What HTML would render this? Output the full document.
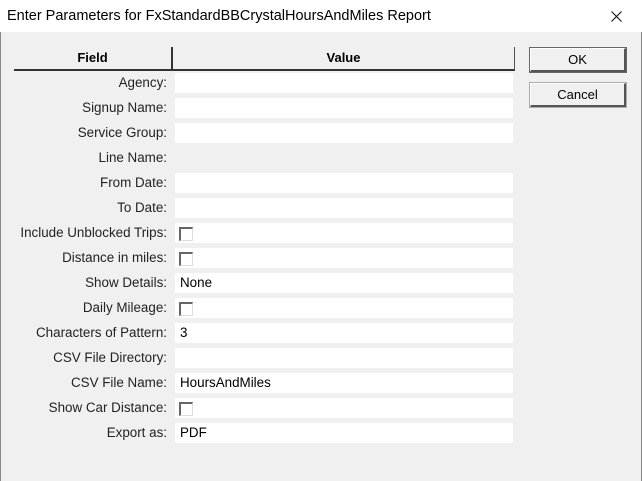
<!DOCTYPE html>
<html><head><style>
body{margin:0;width:642px;height:481px;background:#f0f0f0;font-family:"Liberation Sans",sans-serif;position:relative;overflow:hidden}
.win{position:absolute;left:0;top:0;width:640px;height:481px;border-left:1px solid #888;border-right:1px solid #888}
.title{position:absolute;left:0;top:0;width:642px;height:32px;background:#fff;font-size:14.5px;line-height:32px}
.title .t{position:absolute;left:7px}
.title svg{position:absolute;left:611px;top:11px}
.hdr{position:absolute;top:47px;height:22px;background:#f0f0f0;border-bottom:2px solid #333;font-weight:bold;font-size:13px;line-height:22px;text-align:center}
.lbl{position:absolute;right:475px;font-size:13.4px;height:20px;line-height:20px;color:#222;white-space:nowrap}
.box{position:absolute;left:175px;width:338px;height:20px;background:#fff;font-size:13.4px;line-height:20px}
.box span{padding-left:5px}
.cb{position:absolute;left:4px;top:4px;width:14px;height:14px;border-top:2px solid #666;border-left:2px solid #666;box-sizing:border-box;border-right:1px solid #ddd;border-bottom:1px solid #ddd}
.btn{position:absolute;left:530px;width:96px;height:24px;background:#f0f0f0;border:1px solid #fff;border-right:2px solid #555;border-bottom:2px solid #555;box-sizing:border-box;font-size:13px;text-align:center;line-height:22px;outline:1px solid #aaa}
</style></head><body>
<div class="win"></div>
<div class="title"><span class="t">Enter Parameters for FxStandardBBCrystalHoursAndMiles Report</span><svg width="11" height="11"><path d="M0.5 0.5L10.5 10.5M10.5 0.5L0.5 10.5" stroke="#111" stroke-width="1.1"/></svg></div>
<div class="hdr" style="left:14px;width:157px;border-right:2px solid #333">Field</div>
<div class="hdr" style="left:173px;width:341px;border-right:1px solid #555">Value</div>
<div class="btn" style="top:48px;outline:1px solid #666">OK</div>
<div class="btn" style="top:83px">Cancel</div>

<div class="lbl" style="top:73px">Agency:</div><div class="box" style="top:73px"></div>
<div class="lbl" style="top:98px">Signup Name:</div><div class="box" style="top:98px"></div>
<div class="lbl" style="top:123px">Service Group:</div><div class="box" style="top:123px"></div>
<div class="lbl" style="top:148px">Line Name:</div>
<div class="lbl" style="top:173px">From Date:</div><div class="box" style="top:173px"></div>
<div class="lbl" style="top:198px">To Date:</div><div class="box" style="top:198px"></div>
<div class="lbl" style="top:223px">Include Unblocked Trips:</div><div class="box" style="top:223px"><div class="cb"></div></div>
<div class="lbl" style="top:248px">Distance in miles:</div><div class="box" style="top:248px"><div class="cb"></div></div>
<div class="lbl" style="top:273px">Show Details:</div><div class="box" style="top:273px"><span>None</span></div>
<div class="lbl" style="top:298px">Daily Mileage:</div><div class="box" style="top:298px"><div class="cb"></div></div>
<div class="lbl" style="top:323px">Characters of Pattern:</div><div class="box" style="top:323px"><span>3</span></div>
<div class="lbl" style="top:348px">CSV File Directory:</div><div class="box" style="top:348px"></div>
<div class="lbl" style="top:373px">CSV File Name:</div><div class="box" style="top:373px"><span>HoursAndMiles</span></div>
<div class="lbl" style="top:398px">Show Car Distance:</div><div class="box" style="top:398px"><div class="cb"></div></div>
<div class="lbl" style="top:423px">Export as:</div><div class="box" style="top:423px"><span>PDF</span></div>
</body></html>
